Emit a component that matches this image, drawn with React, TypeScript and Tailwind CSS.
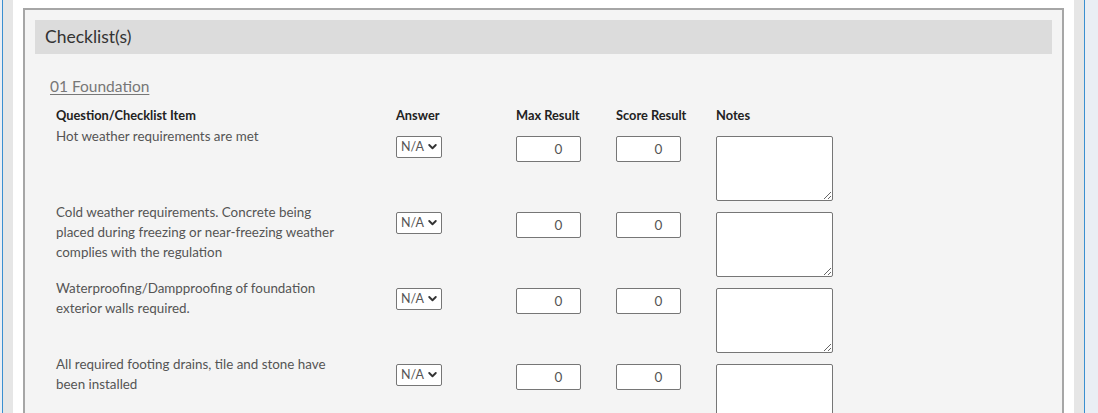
const items = [
  "Hot weather requirements are met",
  "Cold weather requirements. Concrete being placed during freezing or near-freezing weather complies with the regulation",
  "Waterproofing/Dampproofing of foundation exterior walls required.",
  "All required footing drains, tile and stone have been installed",
];

function AnswerSelect() {
  return (
    <div className="relative w-[46px] h-[22px]">
      <select
        defaultValue="na"
        className="appearance-none w-full h-full bg-white border border-[#767676] rounded-[2px] pl-[4px] pr-[16px] text-[12.5px] text-[#555] leading-none outline-none"
      >
        <option value="na">N/A</option>
        <option value="yes">Yes</option>
        <option value="no">No</option>
      </select>
      <svg
        viewBox="0 0 10 7"
        className="absolute right-[5px] top-[8px] w-[9px] h-[6px] pointer-events-none"
      >
        <path d="M1.2 1.2 L5 5 L8.8 1.2" fill="none" stroke="#333" strokeWidth="2.2" strokeLinecap="round" strokeLinejoin="round" />
      </svg>
    </div>
  );
}

function NumberBox() {
  return (
    <input
      type="text"
      defaultValue="0"
      className="w-[65px] h-[26px] bg-white border border-[#767676] rounded-[2px] pl-5 text-center text-[13.5px] text-[#555] outline-none"
    />
  );
}

export default function App() {
  return (
    <div
      className="h-[413px] overflow-hidden bg-[#eaeef4] flex"
      style={{ fontFamily: "Lato, 'Liberation Sans', sans-serif" }}
    >
      <div className="ml-[2px] border-l border-r border-[#3a8fd0] bg-[#e6e6e6] px-[10px] w-[1083px]">
        <div className="bg-white px-[10px] h-full pt-[8px]">
          <div className="border-2 border-[#a6a6a6] bg-[#f4f4f4] p-[10px] h-[600px]">
            <div className="bg-[#dcdcdc] h-[34px] flex items-center px-[10px]">
              <h2 className="text-[17.5px] text-[#333]">Checklist(s)</h2>
            </div>

            <div className="pl-[15px] pt-[20px]">
              <a href="#" className="text-[15.5px] leading-[20px] text-[#777] underline underline-offset-2">
                01 Foundation
              </a>
            </div>

            <div className="pl-[21px] mt-[8px] text-[13.4px] text-[#555]">
              <div className="grid grid-cols-[340px_120px_100px_100px_1fr] h-[20px] items-center text-[12.8px] font-bold text-[#222]">
                <div>Question/Checklist Item</div>
                <div>Answer</div>
                <div>Max Result</div>
                <div>Score Result</div>
                <div>Notes</div>
              </div>

              {items.map((q) => (
                <div key={q} className="grid grid-cols-[340px_120px_100px_100px_1fr] h-[76px] items-start">
                  <p className="leading-[20px] w-[285px]">{q}</p>
                  <div className="mt-[10px]">
                    <AnswerSelect />
                  </div>
                  <div className="mt-[10px]">
                    <NumberBox />
                  </div>
                  <div className="mt-[10px]">
                    <NumberBox />
                  </div>
                  <div className="mt-[10px]">
                    <textarea className="block w-[117px] h-[65px] bg-white border border-[#767676] rounded-[2px] outline-none" />
                  </div>
                </div>
              ))}
            </div>
          </div>
        </div>
      </div>
    </div>
  );
}
